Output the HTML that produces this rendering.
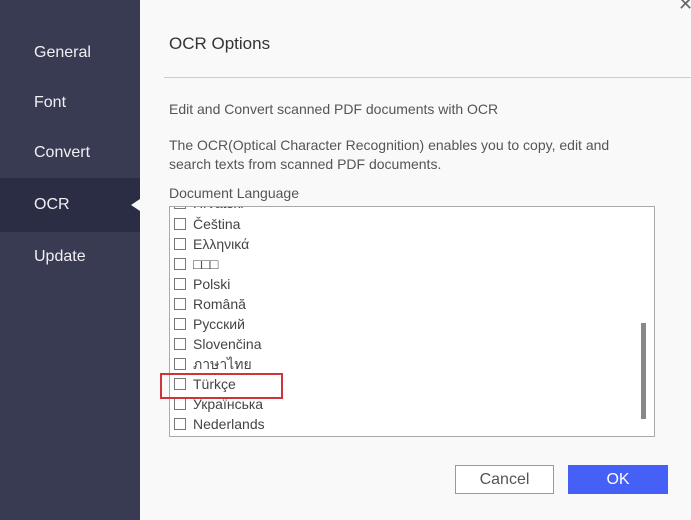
<!DOCTYPE html>
<html><head><meta charset="utf-8"><style>
body{margin:0;width:691px;height:520px;overflow:hidden;background:#f9f9f9;font-family:"Liberation Sans","Noto Sans CJK SC",sans-serif;position:relative}
.side{position:absolute;left:0;top:0;width:140px;height:520px;background:#393b52}
.nav{position:absolute;left:34px;color:#f0f0f4;font-size:16px}
.act{position:absolute;left:0;top:178px;width:140px;height:54px;background:#2b2d44}
.arr{position:absolute;left:131px;top:199px;width:0;height:0;border-top:6px solid transparent;border-bottom:6px solid transparent;border-right:9px solid #f9f9f9}
.t{position:absolute;color:#555;font-size:14px}
.box{position:absolute;left:169px;top:206px;width:484px;height:229px;border:1px solid #aaa;background:#fff;overflow:hidden}
.row{position:absolute;left:23px;font-size:14px;color:#444;height:20px;line-height:20px}
.cb{position:absolute;left:-19px;top:4px;width:10px;height:10px;border:1px solid #777;background:#fff}
.sb{position:absolute;left:471px;top:116px;width:5px;height:96px;background:#888}
</style></head><body>
<div class="side">
<div class="act"></div>
<div class="nav" style="top:44px">General</div>
<div class="nav" style="top:94px">Font</div>
<div class="nav" style="top:144px">Convert</div>
<div class="nav" style="top:196px">OCR</div>
<div class="nav" style="top:248px">Update</div>
<div class="arr"></div>
</div>
<div style="position:absolute;left:678px;top:-6px;color:#666;font-size:18px">✕</div>
<div class="t" style="left:169px;top:34px;font-size:17px;color:#333">OCR Options</div>
<div style="position:absolute;left:164px;top:77px;width:527px;height:1px;background:#ccc"></div>
<div class="t" style="left:169px;top:101px">Edit and Convert scanned PDF documents with OCR</div>
<div class="t" style="left:169px;top:136px;line-height:19px">The OCR(Optical Character Recognition) enables you to copy, edit and<br>search texts from scanned PDF documents.</div>
<div class="t" style="left:169px;top:185px">Document Language</div>
<div class="box">
<div class="row" style="top:-14px"><span class="cb"></span>Hrvatski</div>
<div class="row" style="top:7px"><span class="cb"></span>Čeština</div>
<div class="row" style="top:27px"><span class="cb"></span>Ελληνικά</div>
<div class="row" style="top:47px"><span class="cb"></span>□□□</div>
<div class="row" style="top:67px"><span class="cb"></span>Polski</div>
<div class="row" style="top:87px"><span class="cb"></span>Română</div>
<div class="row" style="top:107px"><span class="cb"></span>Русский</div>
<div class="row" style="top:127px"><span class="cb"></span>Slovenčina</div>
<div class="row" style="top:147px"><span class="cb"></span>ภาษาไทย</div>
<div class="row" style="top:167px"><span class="cb"></span>Türkçe</div>
<div class="row" style="top:187px"><span class="cb"></span>Українська</div>
<div class="row" style="top:207px"><span class="cb"></span>Nederlands</div>
<div class="sb"></div>
</div>
<div style="position:absolute;left:160px;top:373px;width:119px;height:22px;border:2px solid #d0343a"></div>
<div style="position:absolute;left:455px;top:465px;width:97px;height:27px;border:1px solid #999;background:#fff;color:#555;font-size:16px;text-align:center;line-height:27px">Cancel</div>
<div style="position:absolute;left:568px;top:465px;width:100px;height:29px;background:#4560f7;color:#fff;font-size:16px;text-align:center;line-height:29px">OK</div>
</body></html>
